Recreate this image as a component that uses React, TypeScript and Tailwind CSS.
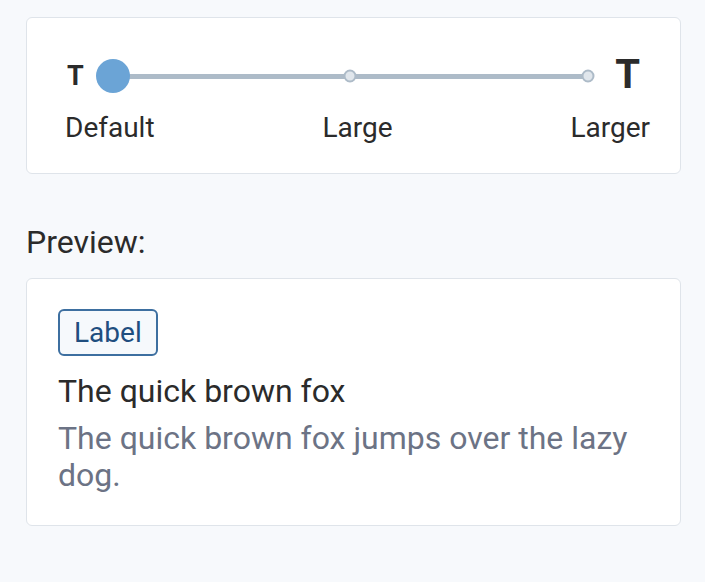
import React, { useState } from 'react';

const SIZES = ['Default', 'Large', 'Larger'];

export default function App() {
  const [size] = useState(0);

  return (
    <div className="min-h-[582px] w-[705px] bg-[#f7f9fc] pt-[17px] pl-[26px] font-['Roboto',sans-serif] text-[#2b2b2b]">
      {/* size picker */}
      <div className="w-[655px] rounded-[6px] border border-[#dfe4ea] bg-white pt-[41px] pb-[29px] pl-[38px] pr-[30px]">
        <div className="flex h-[34px] items-center pl-[2px]">
          <span className="text-[27px] font-bold leading-none">T</span>
          <div className="relative ml-[12px] mr-[10px] h-[34px] flex-1">
            <div className="absolute left-[17px] right-[17px] top-[14.5px] h-[5px] rounded-full bg-[#adbbc8]" />
            {SIZES.map((s, i) => (
              <div
                key={s}
                className="absolute top-1/2 h-[13px] w-[13px] -translate-x-1/2 -translate-y-1/2 rounded-full border-2 border-[#adbbc8] bg-[#e0e6ec]"
                style={{ left: `calc(17px + (100% - 34px) * ${i / 2})` }}
              />
            ))}
            <div
              className="absolute top-0 h-[34px] w-[34px] rounded-full bg-[#6ba4d6]"
              style={{ left: `calc((100% - 34px) * ${size / 2})` }}
            />
          </div>
          <span className="-mt-[3px] mr-[10px] text-[40px] font-bold leading-none">T</span>
        </div>
        <div className="mt-[19px] grid grid-cols-3 text-[28px] leading-[32px]">
          <span className="text-left">Default</span>
          <span className="text-center">Large</span>
          <span className="text-right">Larger</span>
        </div>
      </div>

      <div className="mt-[50px] text-[32px] leading-[37px]">Preview:</div>

      {/* preview */}
      <div className="mt-[17px] w-[655px] rounded-[6px] border border-[#dfe4ea] bg-white pt-[30px] pb-[31px] pl-[31px] pr-[31px]">
        <span className="flex h-[47px] w-fit items-center rounded-[6px] border-2 border-[#3d6fa0] bg-[#f6f9fc] px-[14px] text-[28px] leading-none text-[#1f4e7f]">
          Label
        </span>
        <div className="mt-[17px] text-[32px] leading-[37px]">The quick brown fox</div>
        <p className="mt-[10px] text-[32px] leading-[37px] text-[#6c7385]">
          The quick brown fox jumps over the lazy dog.
        </p>
      </div>
    </div>
  );
}
